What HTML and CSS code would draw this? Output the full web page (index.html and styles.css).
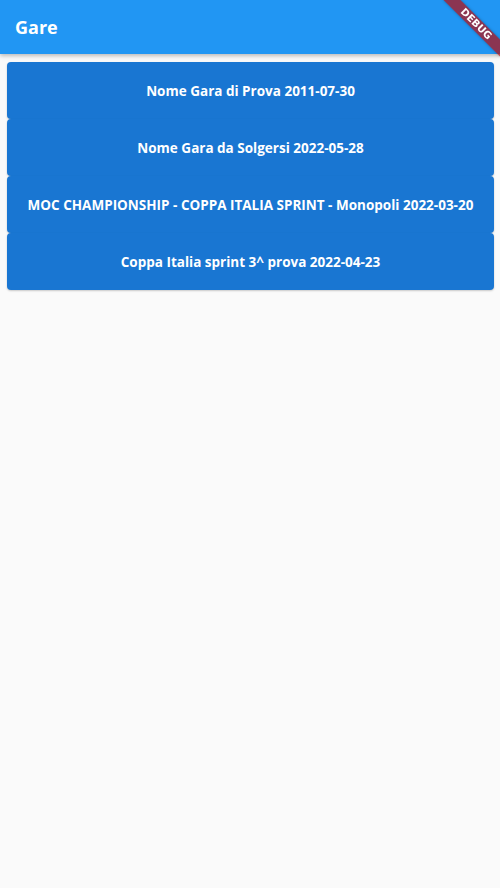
FILE: index.html
```html
<!DOCTYPE html>
<html lang="it">
<head>
<meta charset="utf-8">
<title>Gare</title>
<link rel="stylesheet" href="styles.css">
</head>
<body>
<header class="appbar">
  <h1 class="appbar-title">Gare</h1>
</header>
<main class="list">
  <button class="race-btn">Nome Gara di Prova 2011-07-30</button>
  <button class="race-btn">Nome Gara da Solgersi 2022-05-28</button>
  <button class="race-btn">MOC CHAMPIONSHIP - COPPA ITALIA SPRINT - Monopoli 2022-03-20</button>
  <button class="race-btn">Coppa Italia sprint 3^ prova 2022-04-23</button>
</main>
<div class="banner-wrap"><div class="banner">DEBUG</div></div>
</body>
</html>
```
FILE: styles.css
```css
html, body {
  margin: 0;
  padding: 0;
  height: 100%;
  overflow: hidden;
}
body {
  background: #fafafa;
  font-family: "Open Sans", "Noto Sans", sans-serif;
}
.appbar {
  height: 54px;
  background: #2196f3;
  display: flex;
  align-items: center;
  padding: 0 15px;
  box-shadow: 0 2px 4px rgba(0,0,0,0.25);
  position: relative;
  z-index: 1;
}
.appbar-title {
  margin: 0;
  color: #fff;
  font-size: 18px;
  font-weight: 700;
  letter-spacing: 0;
}
.list {
  display: flex;
  flex-direction: column;
  padding: 8px 6px 0 7px;
}
.race-btn {
  height: 57px;
  border: none;
  border-radius: 4px;
  background: #1976d2;
  color: #fff;
  font-family: inherit;
  font-size: 13.5px;
  font-weight: 700;
  box-shadow: 0 1px 2px rgba(0,0,0,0.2);
  padding: 0 8px;
}
.banner-wrap {
  position: fixed;
  top: 0;
  right: 0;
  width: 70px;
  height: 70px;
  overflow: hidden;
  z-index: 5;
}
.banner {
  position: absolute;
  left: 6px;
  top: 18px;
  width: 80px;
  height: 12px;
  line-height: 12px;
  transform: rotate(45deg);
  background: rgba(180, 15, 20, 0.72);
  color: #fff;
  font-family: "DejaVu Sans", sans-serif;
  font-size: 10px;
  font-weight: 900;
  text-align: center;
  box-shadow: 0 0 3px rgba(0,0,0,0.3);
}
```
